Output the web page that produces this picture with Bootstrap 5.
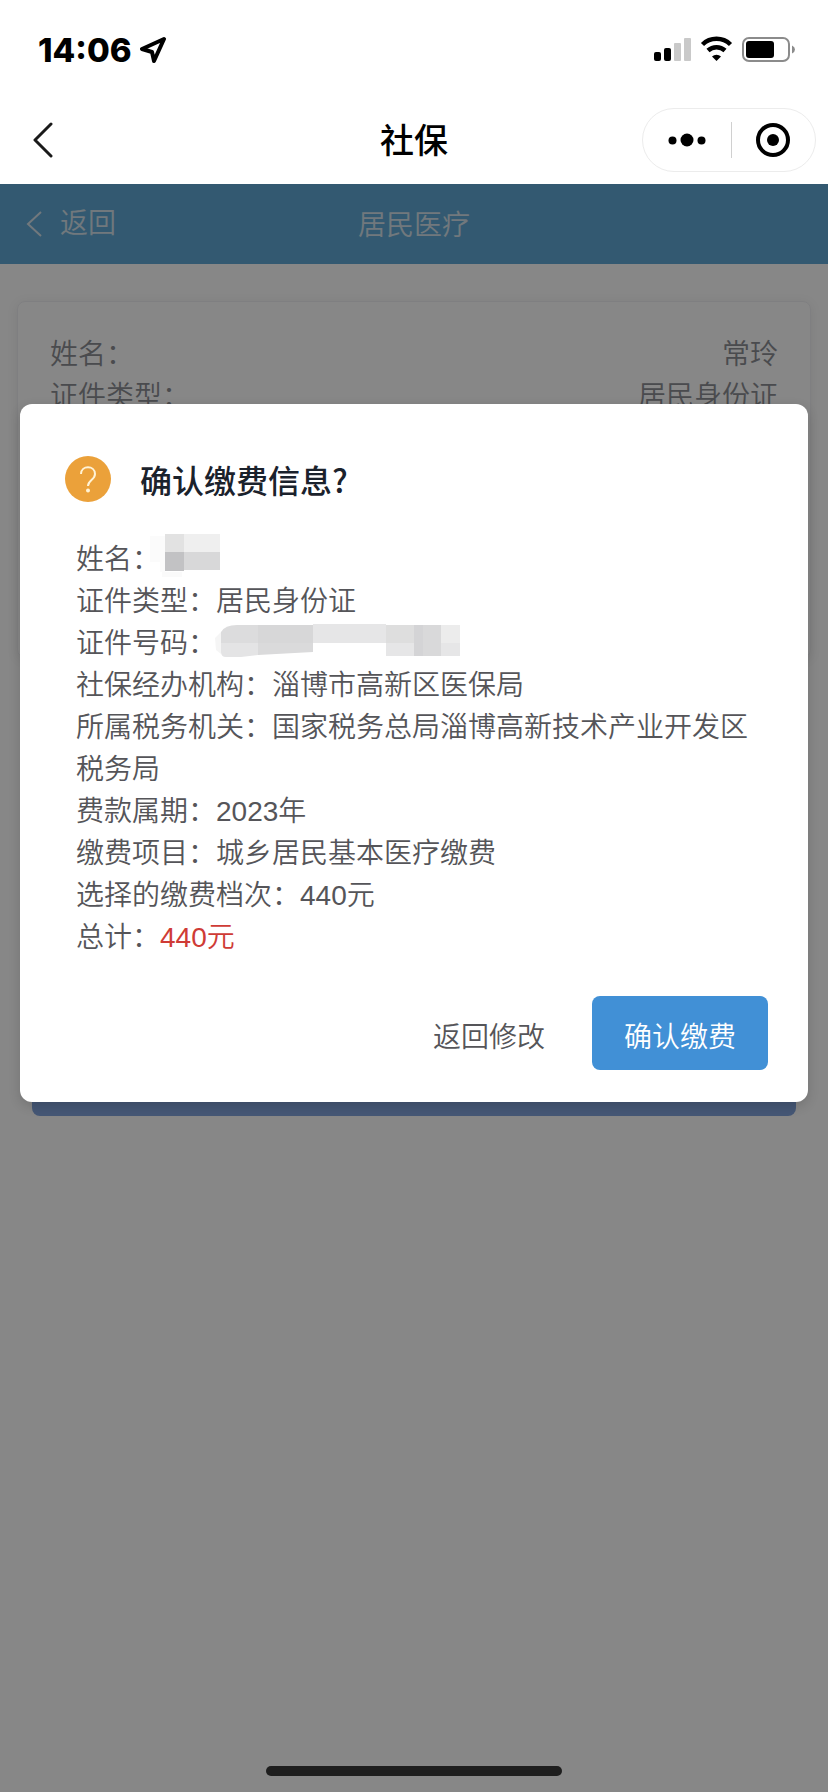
<!DOCTYPE html>
<html lang="zh-CN">
<head>
<meta charset="utf-8">
<meta name="viewport" content="width=device-width, initial-scale=1">
<title>社保</title>
<link href="https://cdn.jsdelivr.net/npm/bootstrap@5.3.0/dist/css/bootstrap.min.css" rel="stylesheet">
<style>
  body { font-family: "Liberation Sans", "Noto Sans CJK SC", sans-serif; font-size: 28px; line-height: 42px; font-weight: 350; color: #555559; background: #fff; }
  .clock { font-family: Inter, sans-serif; font-size: 33px; font-weight: 800; line-height: 40px; color: #000; }
  .status-bar { height: 100px; padding: 0 32px 0 38px; }
  .mini-nav { height: 84px; padding: 0 12px 4px; color: #000; }
  .mini-back { margin-left: 21px; }
  .mini-title { font-size: 34px; font-weight: 500; line-height: 44px; padding-top: 1px; }
  .side { flex: 1 1 0; }
  .capsule { width: 174px; height: 64px; border: 1px solid #ececec; border-radius: 32px; }
  .capsule .btn { border: 0; }
  .capsule-rule { width: 1px; height: 36px; background: #d0d0d0; }
  .webview { background: #fff; }
  .page-head { height: 80px; padding: 4px 26px 0; background: #61a9d5; color: #d6e3ec; }
  .page-head a { color: inherit; }
  .info-card { margin: 37px 17px 0; padding: 32px; height: 357px; border: 1px solid #f0f0f3; border-radius: 8px; color: #8c8e94; overflow: hidden; box-shadow: 0 2px 12px rgba(0, 0, 0, .08); }
  .pay-btn { margin: 368px 32px 0; height: 90px; background: #82a4dd; color: #fff; border-radius: 8px; }
  .scrim { background: rgba(0, 0, 0, .47); padding: 220px 20px 0; }
  .confirm-box { background: #fff; border: 0; border-radius: 12px; padding: 51px 40px 32px 44px; color: inherit; box-shadow: 0 4px 12px rgba(0, 0, 0, .15); }
  .confirm-title { font-family: "Noto Sans CJK SC", sans-serif; font-size: 32px; line-height: 48px; font-weight: 500; color: #1b222c; }
  .confirm-list { margin: 36px 12px 0; }
  .confirm-list dt, .confirm-list dd { display: inline; margin: 0; font-weight: inherit; }
  .masked { height: 30px; overflow: visible; vertical-align: middle; }
  .total { color: #cf3b36; }
  .confirm-actions { margin-top: 37px; gap: 15px; }
  .confirm-actions .btn { height: 74px; padding: 10px 32px 0; font-size: 28px; font-weight: 350; border: 0; border-radius: 8px; color: #555559; }
  .confirm-actions .btn-main { background: #4190d6; color: #fff; }
  .home-bar { position: relative; z-index: 2; width: 296px; height: 10px; border-radius: 5px; background: #1e1e1e; margin-bottom: 16px; }
</style>
</head>
<body>
<div class="d-flex flex-column min-vh-100">
  <div class="status-bar d-flex align-items-center justify-content-between">
    <div class="d-flex align-items-center gap-2">
      <span class="clock">14:06</span>
      <svg width="28" height="28" viewBox="0 0 28 28" fill="none" stroke="#000" stroke-width="4" stroke-linejoin="round"><path d="M24 3 2 13l10 3 2 9z"/></svg>
    </div>
    <svg width="142" height="28" viewBox="0 0 142 28">
      <rect x="0" y="16" width="7" height="9" rx="2"/><rect x="10" y="12" width="7" height="13" rx="2"/>
      <rect x="20" y="7" width="7" height="18" rx="1" fill="#c9c9c9"/><rect x="30" y="2" width="7" height="23" rx="1" fill="#c9c9c9"/>
      <g fill="none" stroke="#000" stroke-width="4.500"><path d="M48.500 8.500a20 20 0 0 1 28 0"/><path d="M54 14.500a12.500 12.500 0 0 1 17 0"/></g>
      <path d="M62.500 25l-4.500-4.500a6.500 6.500 0 0 1 9 0z"/>
      <rect x="89" y="2" width="46" height="23" rx="6" fill="none" stroke="#8b8b8b" stroke-width="2"/>
      <rect x="92" y="5" width="28" height="17" rx="3"/><path d="M138 9.500q3 1.500 3 4t-3 4z" fill="#8b8b8b"/>
    </svg>
  </div>
  <header class="mini-nav d-flex align-items-center">
    <div class="side d-flex">
      <button type="button" class="mini-back btn p-0 border-0 d-flex" aria-label="返回"><svg width="20" height="36" viewBox="0 0 20 36" fill="none" stroke="#1a1a1a" stroke-width="3" stroke-linecap="round" stroke-linejoin="round"><path d="M18 2 2 18l16 16"/></svg></button>
    </div>
    <h1 class="mini-title mb-0">社保</h1>
    <div class="side d-flex justify-content-end">
      <div class="capsule d-flex align-items-center">
        <button type="button" class="btn p-0 flex-fill d-flex justify-content-center" aria-label="更多"><svg width="38" height="14" viewBox="0 0 38 14"><circle cx="4.500" cy="7.500" r="4"/><circle cx="19" cy="7" r="6.500"/><circle cx="33.500" cy="7.500" r="4"/></svg></button>
        <span class="capsule-rule"></span>
        <button type="button" class="btn p-0 flex-fill d-flex justify-content-center" aria-label="关闭"><svg width="34" height="34" viewBox="0 0 34 34"><circle cx="17" cy="17" r="15" fill="none" stroke="#000" stroke-width="4"/><circle cx="17" cy="17" r="6"/></svg></button>
      </div>
    </div>
  </header>
  <main class="webview position-relative flex-grow-1 d-flex flex-column">
    <div class="page-head d-flex align-items-center">
      <div class="side"><a href="#" class="d-inline-flex align-items-center text-decoration-none"><svg class="me-3" width="18" height="26" viewBox="0 0 18 26" fill="none" stroke="currentColor" stroke-width="2"><path d="M15 1 2 13l13 12"/></svg>返回</a></div>
      <span>居民医疗</span>
      <div class="side"></div>
    </div>
    <section class="info-card">
      <div class="d-flex justify-content-between"><span>姓名：</span><span>常玲</span></div>
      <div class="d-flex justify-content-between"><span>证件类型：</span><span>居民身份证</span></div>
    </section>
    <button type="button" class="pay-btn btn border-0" aria-label="缴费"></button>
    <div class="home-bar mt-auto mx-auto"></div>
    <div class="scrim position-absolute top-0 start-0 w-100 h-100">
      <div class="confirm-box modal-content" role="dialog" aria-labelledby="confirmTitle">
        <div class="d-flex align-items-center">
          <svg width="48" height="48" viewBox="0 0 48 48" fill="none"><circle cx="24" cy="24" r="23" fill="#eba13a"/><path d="M17 19c0-9 14-9 14 0 0 6-7 6-7 12" stroke="#fff3d6" stroke-width="2"/><circle cx="24" cy="35.500" r="2" fill="#fff3d6"/></svg>
          <h2 class="confirm-title m-0 ps-4 ms-1" id="confirmTitle">确认缴费信息?</h2>
        </div>
        <dl class="confirm-list mb-0">
          <div><dt>姓名：</dt><dd><svg class="masked" width="64" viewBox="0 13 64 30" aria-hidden="true"><path d="M-10 2H5v36h-5v-10h-10z" fill="#fbfbfb"/><path d="M2 38h20v5H2z" fill="#fafafa"/><path d="M5 0h19v18H5z" fill="#e2e2e2"/><path d="M24 0h36v18H24z" fill="#efefef"/><path d="M5 18h19v19H5z" fill="#c2c2c4"/><path d="M24 18h36v18H24z" fill="#d8d8d9"/></svg></dd></div>
          <div><dt>证件类型：</dt><dd>居民身份证</dd></div>
          <div><dt>证件号码：</dt><dd><svg class="masked" width="250" viewBox="0 7 250 30" aria-hidden="true"><path d="M-1 14l6-6v22l-5-4z" fill="#f5f5f5"/><path d="M5 8q4-7 16-7h21v18H5z" fill="#dcdcdd"/><path d="M42 1h55v18H42z" fill="#d7d7d8"/><path d="M97 0h73v19H97z" fill="#e6e6e7"/><path d="M5 19h37v12l-17 2H10q-5 0-5-5z" fill="#e4e4e5"/><path d="M42 19h55v9l-55 3z" fill="#dadadb"/><path d="M170 1h28v31h-28z" fill="#dedede"/><path d="M198 1h9v31h-9z" fill="#d4d4d6"/><path d="M207 1h18v31h-18z" fill="#d9d9da"/><path d="M225 1h19v31h-19z" fill="#ececec"/><path d="M170 19h28v13h-28zM225 19h19v13h-19z" fill="#e6e6e7"/></svg></dd></div>
          <div><dt>社保经办机构：</dt><dd>淄博市高新区医保局</dd></div>
          <div><dt>所属税务机关：</dt><dd>国家税务总局淄博高新技术产业开发区税务局</dd></div>
          <div><dt>费款属期：</dt><dd>2023年</dd></div>
          <div><dt>缴费项目：</dt><dd>城乡居民基本医疗缴费</dd></div>
          <div><dt>选择的缴费档次：</dt><dd>440元</dd></div>
          <div><dt>总计：</dt><dd class="total">440元</dd></div>
        </dl>
        <div class="confirm-actions d-flex justify-content-end">
          <button type="button" class="btn">返回修改</button>
          <button type="button" class="btn btn-main">确认缴费</button>
        </div>
      </div>
    </div>
  </main>
</div>
<script src="https://cdn.jsdelivr.net/npm/bootstrap@5.3.0/dist/js/bootstrap.bundle.min.js"></script>
</body>
</html>
